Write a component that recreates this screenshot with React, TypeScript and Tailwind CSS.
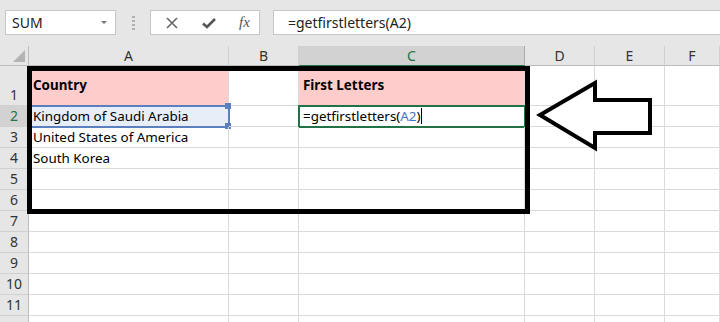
import React from 'react';

const cols = ['A', 'B', 'C', 'D', 'E', 'F'];
const rows = [1, 2, 3, 4, 5, 6, 7, 8, 9, 10, 11, 12];

const font = { fontFamily: '"Noto Sans", "Open Sans", sans-serif' };

const cellText: Record<string, string> = {
  A1: 'Country',
  C1: 'First Letters',
  A3: 'United States of America',
  A4: 'South Korea',
};

const App = () => {
  return (
    <div className="w-[720px] h-[322px] overflow-hidden bg-white relative" style={font}>
      {/* Formula bar */}
      <div className="h-[46px] bg-[#e6e6e6] flex items-start pt-[10px] pl-[5px] gap-0">
        <div className="w-[111px] h-[25px] bg-white border border-[#c6c6c6] flex items-center justify-between pl-[6px] pr-[7px] text-[14px] text-[#222]">
          <span>SUM</span>
          <svg width="8" height="5" viewBox="0 0 8 5"><path d="M1 1 L4 4 L7 1 Z" fill="#777" /></svg>
        </div>
        <div className="w-[34px] h-[25px] flex flex-col items-center justify-center gap-[2px]">
          <span className="w-[3px] h-[2px] bg-[#b0b0b0]" />
          <span className="w-[3px] h-[2px] bg-[#b0b0b0]" />
          <span className="w-[3px] h-[2px] bg-[#b0b0b0]" />
          <span className="w-[3px] h-[2px] bg-[#b0b0b0]" />
        </div>
        <div className="w-[110px] h-[25px] bg-white border border-[#c6c6c6] flex items-center pl-[14px] gap-[22px] text-[#555]">
          <svg width="14" height="14" viewBox="0 0 14 14"><path d="M2 2 L12 12 M12 2 L2 12" stroke="#666" strokeWidth="1.6" /></svg>
          <svg width="16" height="14" viewBox="0 0 16 14"><path d="M2 7.5 L6 11 L14 3" stroke="#555" strokeWidth="2.6" fill="none" /></svg>
          <span className="italic text-[15px] text-[#555] leading-none" style={{ fontFamily: '"Liberation Serif", serif' }}>fx</span>
        </div>
        <div className="ml-[13px] flex-1 h-[25px] bg-white border border-[#c6c6c6] border-r-0 flex items-center pl-[14px] text-[14px] text-[#222]">
          =getfirstletters(A2)
        </div>
      </div>

      {/* Grid */}
      <div className="grid grid-cols-[29px_200px_70px_226px_70px_70px_1fr] grid-rows-[20px_40px_repeat(11,21px)]">
        <div className="bg-[#e6e6e6] border-r border-b border-[#bcbcbc] relative">
          <svg className="absolute right-[3px] bottom-[3px]" width="12" height="12" viewBox="0 0 12 12"><path d="M12 0 L12 12 L0 12 Z" fill="#b4b4b4" /></svg>
        </div>
        {cols.map((c) => (
          <div
            key={c}
            className={`flex items-center justify-center text-[14px] border-r border-b ${c === 'C' ? 'bg-[#d2d2d2] text-[#217346] border-[#ababab] border-b-[#217346]' : 'bg-[#e6e6e6] text-[#333] border-[#d0d0d0] border-b-[#bcbcbc]'}`}
          >
            {c}
          </div>
        ))}
        {rows.map((r) => (
          <React.Fragment key={r}>
            <div
              className={`flex items-end justify-center pb-[1px] text-[14px] leading-[18px] border-r border-b border-[#d0d0d0] border-r-[#bcbcbc] ${r === 2 ? 'bg-[#d2d2d2] text-[#217346]' : 'bg-[#e6e6e6] text-[#333]'}`}
            >
              {r < 12 ? r : ''}
            </div>
            {cols.map((c) => {
              const id = `${c}${r}`;
              const pink = r === 1 && (c === 'A' || c === 'C');
              return (
                <div
                  key={id}
                  className={`relative flex items-center border-r border-b border-[#dadada] pl-[4px] text-[13.4px] text-black whitespace-nowrap ${pink ? 'bg-[#ffcccc] font-bold' : ''} ${id === 'A2' ? 'bg-[#e8eef8]' : ''}`}
                >
                  {cellText[id]}
                  {id === 'A2' && (
                    <>
                      <span>Kingdom of Saudi Arabia</span>
                      <div className="absolute -left-[1px] -top-[1px] w-[202px] h-[23px] border-2 border-[#5b7fbf]" />
                      <div className="absolute -right-[3px] -top-[3px] w-[6px] h-[6px] bg-[#5b7fbf]" />
                      <div className="absolute -right-[3px] -bottom-[3px] w-[6px] h-[6px] bg-[#5b7fbf]" />
                    </>
                  )}
                  {id === 'C2' && (
                    <>
                      <span>=getfirstletters(</span>
                      <span className="text-[#4472c4]">A2</span>
                      <span>)</span>
                      <span className="w-[1px] h-[16px] bg-black" />
                      <div className="absolute -left-[1px] -top-[1px] w-[228px] h-[23px] border-2 border-[#217346]" />
                    </>
                  )}
                </div>
              );
            })}
          </React.Fragment>
        ))}
      </div>

      {/* Black highlight box */}
      <div className="absolute left-[27px] top-[66px] w-[503px] h-[148px] border-[5px] border-black pointer-events-none" />

      {/* Arrow */}
      <svg className="absolute left-0 top-0 pointer-events-none" width="720" height="322">
        <polygon
          points="540,115 595,83 595,100 650,100 650,133 595,133 595,148"
          fill="white"
          stroke="black"
          strokeWidth="4"
          strokeLinejoin="miter"
        />
      </svg>
    </div>
  );
};

export default App;
